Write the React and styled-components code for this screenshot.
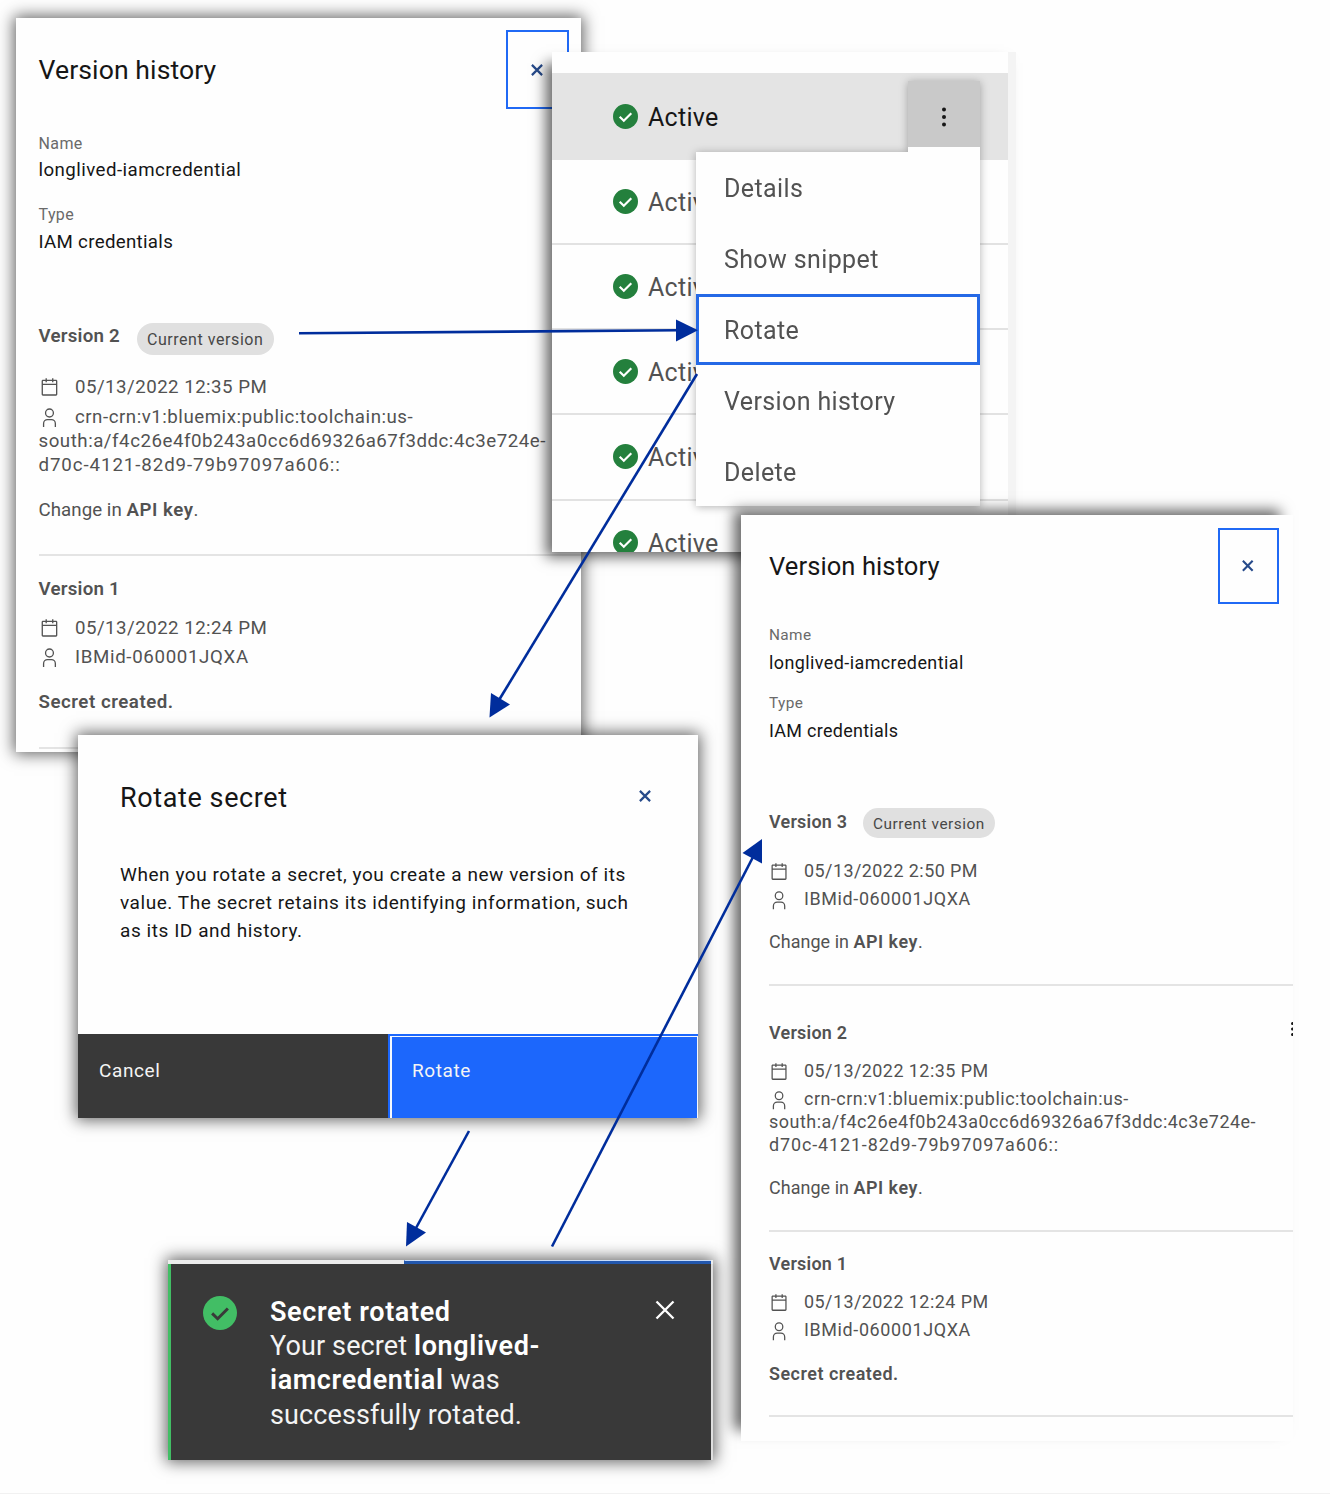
import React from "react";
import styled, { createGlobalStyle, css } from "styled-components";

const Global = createGlobalStyle`
  *, *::before, *::after { box-sizing: border-box; }
  body { margin: 0; background: #fefefe; font-family: Roboto, "Liberation Sans", sans-serif; }
  p, h2, h3, ul, dl, dd { margin: 0; padding: 0; font: inherit; }
  button { border: 0; padding: 0; margin: 0; background: none; font: inherit; text-align: left; }
  svg { display: block; }
`;

/* Free canvas that holds the overlapping windows */
const Canvas = styled.main`
  position: relative;
  width: 1330px;
  height: 1494px;
  overflow: hidden;
  background: #fefefe;
  border-bottom: 1px solid #f1f1f1;
`;

const Window = styled.section`
  position: absolute;
  left: ${(p) => p.$x}px;
  top: ${(p) => p.$y}px;
  width: ${(p) => p.$w}px;
  height: ${(p) => p.$h}px;
  box-shadow: ${(p) => p.$shadow || "0 0 15px 2px rgba(0, 0, 0, 0.62)"};
`;

/* ---------- icons ---------- */
const CloseIcon = ({ w = 12, h = 12, color = "#264a8a", sw = 2.2 }) => (
  <svg width={w} height={h} viewBox="0 0 12 12" preserveAspectRatio="none" fill="none" stroke={color} strokeWidth={sw}>
    <path d="M0.9 0.9 11.1 11.1 M11.1 0.9 0.9 11.1" />
  </svg>
);

const CalendarIcon = () => (
  <svg width="100%" height="100%" viewBox="0 0 32 32" preserveAspectRatio="none" fill="currentColor">
    <path d="M26 4h-4V2h-2v2h-8V2h-2v2H6c-1.100 0-2 .9-2 2v20c0 1.100.9 2 2 2h20c1.100 0 2-.9 2-2V6c0-1.100-.9-2-2-2zm0 22H6V12h20v14zm0-16H6V6h4v2h2V6h8v2h2V6h4v4z" />
  </svg>
);

const UserIcon = () => (
  <svg width="100%" height="100%" viewBox="0 0 32 32" preserveAspectRatio="none" fill="currentColor">
    <path d="M16 4a5 5 0 1 1-5 5 5 5 0 0 1 5-5m0-2a7 7 0 1 0 7 7 7 7 0 0 0-7-7zM26 30h-2v-5a5 5 0 0 0-5-5h-6a5 5 0 0 0-5 5v5H6v-5a7 7 0 0 1 7-7h6a7 7 0 0 1 7 7z" />
  </svg>
);

const CheckIcon = ({ size, color, tick, sw = 1.4 }) => (
  <svg width={size} height={size} viewBox="0 0 16 16">
    <circle cx="8" cy="8" r="8" fill={color} />
    <path d="M4.300 8.200 6.900 10.700 11.700 5.900" fill="none" stroke={tick} strokeWidth={sw} />
  </svg>
);

const DotsIcon = () => (
  <svg width="6" height="20" viewBox="0 0 6 20" fill="#161616">
    <circle cx="3" cy="2.500" r="2" />
    <circle cx="3" cy="10" r="2" />
    <circle cx="3" cy="17.500" r="2" />
  </svg>
);

/* ---------- version history ---------- */
const Sheet = styled.div`
  height: 100%;
  overflow: hidden;
  background: #fefefe;
  font-size: ${(p) => p.$unit}px;
  padding-left: ${(p) => p.$left}px;
  padding-top: ${(p) => p.$top}px;
  color: #525252;
  white-space: nowrap;
`;

const SheetHeader = styled.header`
  display: flex;
  justify-content: space-between;
  height: 7.9em;
  margin-right: ${(p) => p.$right}px;
  margin-bottom: ${(p) => p.$gap}em;
`;

const SheetTitle = styled.h2`
  color: #161616;
  font-size: 2.66em;
  line-height: 3.03em;
  letter-spacing: 0.0035em;
`;

const CloseBox = styled.button`
  display: grid;
  place-items: center;
  width: 6.35em;
  height: 7.9em;
  border: 2.500px solid #2069f5;
`;

const Fields = styled.dl`
  display: grid;
  gap: 2.15em;
  margin-bottom: 6.8em;
`;

const Label = styled.dt`
  font-size: 1.6em;
  line-height: 1.25em;
  color: #6a6a6a;
  letter-spacing: 0.025em;
  margin-bottom: 0.37em;
`;

const Value = styled.dd`
  font-size: 1.87em;
  line-height: 1.283em;
  color: #161616;
  letter-spacing: ${(p) => p.$ls || 0.0235}em;
`;

const Entry = styled.article`
  padding-top: ${(p) => p.$lead}em;
  padding-bottom: 3.15em;
  border-bottom: 2px solid #e4e4e4;
`;

const EntryHead = styled.div`
  display: flex;
  align-items: center;
  gap: 1.65em;
  height: ${(p) => (p.$tagged ? 3.2 : 2.4)}em;
  margin-bottom: ${(p) => (p.$tagged ? 2.15 : 1.55)}em;
`;

const EntryTitle = styled.h3`
  font-size: 1.87em;
  font-weight: 600;
  line-height: 1.283em;
  letter-spacing: 0.013em;
  margin-bottom: ${(p) => (p.$tagged ? "0.15em" : 0)};
`;

const EntryMenu = styled.span`
  margin-left: auto;
  margin-right: -2px;
  margin-top: -8px;
`;

const Tag = styled.span`
  font-size: 1.6em;
  line-height: 2.1em;
  height: 2em;
  padding: 0 0.65em;
  border-radius: 1em;
  background: #e0e0e0;
  color: #474747;
  letter-spacing: 0.035em;
`;

const Meta = styled.p`
  font-size: 1.87em;
  line-height: 1.283em;
  margin-bottom: 0.29em;
`;

const MetaText = styled.span`
  letter-spacing: ${(p) => p.$ls || 0.025}em;
`;

const MetaIcon = styled.span`
  display: inline-block;
  width: 1.12em;
  height: 1.14em;
  margin-right: 0.83em;
  vertical-align: -0.28em;
`;

const Strong = styled.strong`
  font-weight: 600;
`;

const Note = styled.p`
  font-size: 1.87em;
  line-height: 1.283em;
  letter-spacing: 0.003em;
  padding-top: 0.83em;
  ${Strong} { letter-spacing: 0.028em; }
`;

const CRN = [
  { text: "crn-crn:v1:bluemix:public:toolchain:us-", ls: 0.028 },
  { text: "south:a/f4c26e4f0b243a0cc6d69326a67f3ddc:4c3e724e-", ls: 0.028 },
  { text: "d70c-4121-82d9-79b97097a606::", ls: 0.049 },
];
const IBMID = [{ text: "IBMid-060001JQXA", ls: 0.035 }];

function VersionHistory({ unit, left, top, right, gap, versions }) {
  return (
    <Sheet $unit={unit} $left={left} $top={top}>
      <SheetHeader $right={right} $gap={gap}>
        <SheetTitle>Version history</SheetTitle>
        <CloseBox aria-label="Close">
          <CloseIcon w={unit * 1.2} h={unit * 1.2} />
        </CloseBox>
      </SheetHeader>
      <Fields>
        <div>
          <Label>Name</Label>
          <Value>longlived-iamcredential</Value>
        </div>
        <div>
          <Label>Type</Label>
          <Value $ls={0.0165}>IAM credentials</Value>
        </div>
      </Fields>
      {versions.map((v) => (
        <Entry key={v.n} $lead={v.current ? 0 : v.menu ? 3.7 : 2.15}>
          <EntryHead $tagged={v.current}>
            <EntryTitle $tagged={v.current}>Version {v.n}</EntryTitle>
            {v.current && <Tag>Current version</Tag>}
            {v.menu && (
              <EntryMenu>
                <svg width="5" height="16" viewBox="0 0 5 16" fill="#161616">
                  <circle cx="2.500" cy="2.500" r="1.500" />
                  <circle cx="2.500" cy="8" r="1.500" />
                  <circle cx="2.500" cy="13.500" r="1.500" />
                </svg>
              </EntryMenu>
            )}
          </EntryHead>
          <Meta>
            <MetaIcon><CalendarIcon /></MetaIcon>
            <MetaText>{v.date}</MetaText>
          </Meta>
          <Meta>
            <MetaIcon><UserIcon /></MetaIcon>
            {v.by.map((line, i) => (
              <React.Fragment key={line.text}>
                {i > 0 && <br />}
                <MetaText $ls={line.ls}>{line.text}</MetaText>
              </React.Fragment>
            ))}
          </Meta>
          <Note>
            {v.created ? <Strong>Secret created.</Strong> : <>Change in <Strong>API key</Strong>.</>}
          </Note>
        </Entry>
      ))}
    </Sheet>
  );
}

/* ---------- secrets table ---------- */
const Table = styled.div`
  height: 100%;
  overflow: hidden;
  background: #fefefe;
  border-right: 8px solid #f4f4f4;
  padding-top: 21px;
`;

const Row = styled.div`
  display: flex;
  align-items: center;
  gap: 10px;
  height: ${(p) => (p.$selected ? 87 : 85.150)}px;
  padding-left: 61px;
  font-size: 25px;
  letter-spacing: 0.3px;
  color: ${(p) => (p.$selected ? "#161616" : "#525252")};
  background: ${(p) => (p.$selected ? "#e4e4e4" : "transparent")};
  border-bottom: ${(p) => (p.$selected ? 0 : 2)}px solid #e2e2e2;
`;

const Status = styled.span`
  padding-top: 2px;
`;

const MenuLayer = styled.div`
  position: absolute;
  left: 144px;
  top: 29px;
  width: 284px;
  display: flex;
  flex-direction: column;
  filter: drop-shadow(0 1px 4px rgba(0, 0, 0, 0.3));
`;

const Trigger = styled.button`
  align-self: flex-end;
  display: grid;
  place-items: center;
  width: 72px;
  height: 71px;
  padding-top: 5px;
  background: #c9c9c9;
  border-bottom: 5px solid #fefefe;
`;

const Menu = styled.ul`
  list-style: none;
  background: #fefefe;
`;

const MenuItem = styled.li`
  display: flex;
  align-items: center;
  height: 70.900px;
  padding-top: 2px;
  padding-left: ${(p) => (p.$focused ? 25 : 28)}px;
  font-size: 25px;
  letter-spacing: 0.38px;
  color: #525252;
  ${(p) => p.$focused && css`border: 3.500px solid #2569e6;`}
`;

/* ---------- dialog ---------- */
const Dialog = styled.div`
  display: flex;
  flex-direction: column;
  height: 100%;
  background: #fefefe;
`;

const DialogHeader = styled.header`
  display: flex;
  justify-content: space-between;
  align-items: center;
  height: 36px;
  margin: 43px 47px 47px 42px;
`;

const DialogTitle = styled.h2`
  padding-top: 3px;
  font-size: 27px;
  letter-spacing: 0.6px;
  color: #161616;
`;

const DialogText = styled.p`
  flex: 1;
  padding-left: 42px;
  font-size: 19px;
  line-height: 28px;
  letter-spacing: 0.56px;
  color: #161616;
  white-space: nowrap;
`;

const Actions = styled.footer`
  display: flex;
  height: 84px;
`;

const Action = styled.button`
  width: 50%;
  padding-left: 21px;
  padding-bottom: 12px;
  color: #f4f4f4;
  font-size: 19px;
  letter-spacing: 0.6px;
  background: #393939;
`;

const PrimaryAction = styled(Action)`
  border: solid #1c67fc;
  border-width: 2.500px 0 0 2.500px;
  background: #1c67fc;
  padding: 0;
`;

const FocusRing = styled.span`
  display: flex;
  align-items: center;
  height: 100%;
  padding: 0 0 14px 20px;
  border: solid #f4f8ff;
  border-width: 1.500px 1px 0 2px;
`;

/* ---------- toast ---------- */
const ToastFrame = styled.div`
  height: 100%;
  display: flex;
  flex-direction: column;
  background: #dedede;
`;

const Edge = styled.div`
  display: flex;
  height: 4px;
  padding-right: 2px;
  background: #ececec;
  justify-content: flex-end;
  &::after {
    content: "";
    width: 307px;
    background: #2257ad;
    border-top: 1px solid #c8dcfa;
    border-left: 1px solid #2257ad;
  }
`;

const Toast = styled.div`
  flex: 1;
  display: flex;
  align-items: flex-start;
  margin-right: 2px;
  padding: 31px 36px 0 32px;
  background: #393939;
  border-left: 3.500px solid #42be65;
  color: #f4f4f4;
`;

const ToastIcon = styled.span`
  padding-top: 1px;
`;

const ToastText = styled.p`
  flex: 1;
  margin-left: 33px;
  font-size: 27px;
  line-height: 34.200px;
  letter-spacing: 0.12px;
  white-space: nowrap;
  ${Strong} { color: #fff; letter-spacing: 0.63px; }
`;

const ToastClose = styled.button`
  margin-top: 5px;
`;

/* ---------- connectors ---------- */
const Connectors = styled.svg`
  position: absolute;
  inset: 0;
  pointer-events: none;
`;

const ARROWS = [
  { line: "M299 333.200 678 330.300", head: "676,319.500 698,330.300 676,341.500" },
  { line: "M697 374 499 700", head: "489.500,717.500 491,693 510,704.500" },
  { line: "M469 1131 416 1228", head: "406,1246.500 407,1222 426,1232.500" },
  { line: "M552 1246.500 753 857", head: "762,839 742.500,853 762,863.500" },
];

export default function App() {
  return (
    <Canvas>
      <Global />
      <Window $x={16} $y={18} $w={565} $h={734}>
        <VersionHistory
          unit={10}
          left={22.5}
          top={12}
          right={12}
          gap={2.45}
          versions={[
            { n: 2, current: true, date: "05/13/2022 12:35 PM", by: CRN },
            { n: 1, date: "05/13/2022 12:24 PM", by: IBMID, created: true },
          ]}
        />
      </Window>

      <Window $x={552} $y={52} $w={464} $h={500} $shadow="-9px 8px 13px -3px rgba(0, 0, 0, 0.6)">
        <Table>
          {[0, 1, 2, 3, 4, 5].map((i) => (
            <Row key={i} $selected={i === 0}>
              <CheckIcon size={25} color="#24803d" tick="#fff" />
              <Status>Active</Status>
            </Row>
          ))}
        </Table>
        <MenuLayer>
          <Trigger aria-label="Options"><DotsIcon /></Trigger>
          <Menu>
            {["Details", "Show snippet", "Rotate", "Version history", "Delete"].map((t) => (
              <MenuItem key={t} $focused={t === "Rotate"}>{t}</MenuItem>
            ))}
          </Menu>
        </MenuLayer>
      </Window>

      <Window $x={741} $y={515} $w={552} $h={926} $shadow="-10px -8px 13px -3px rgba(0, 0, 0, 0.6)">
        <VersionHistory
          unit={9.6}
          left={28}
          top={13}
          right={14.5}
          gap={2.3}
          versions={[
            { n: 3, current: true, date: "05/13/2022 2:50 PM", by: IBMID },
            { n: 2, menu: true, date: "05/13/2022 12:35 PM", by: CRN },
            { n: 1, date: "05/13/2022 12:24 PM", by: IBMID, created: true },
          ]}
        />
      </Window>

      <Window $x={78} $y={735} $w={620} $h={383}>
        <Dialog>
          <DialogHeader>
            <DialogTitle>Rotate secret</DialogTitle>
            <CloseIcon w={12} h={12} />
          </DialogHeader>
          <DialogText>
            When you rotate a secret, you create a new version of its<br />
            value. The secret retains its identifying information, such<br />
            as its ID and history.
          </DialogText>
          <Actions>
            <Action>Cancel</Action>
            <PrimaryAction><FocusRing>Rotate</FocusRing></PrimaryAction>
          </Actions>
        </Dialog>
      </Window>

      <Window $x={168} $y={1260} $w={545} $h={200}>
        <ToastFrame>
          <Edge />
          <Toast>
            <ToastIcon><CheckIcon size={34} color="#42be65" tick="#393939" /></ToastIcon>
            <ToastText>
              <Strong>Secret rotated</Strong><br />
              Your secret <Strong>longlived-</Strong><br />
              <Strong>iamcredential</Strong> was<br />
              successfully rotated.
            </ToastText>
            <ToastClose aria-label="Dismiss">
              <CloseIcon w={20} h={20} color="#fff" sw={1.4} />
            </ToastClose>
          </Toast>
        </ToastFrame>
      </Window>

      <Connectors width="1330" height="1494" viewBox="0 0 1330 1494">
        {ARROWS.map((a) => (
          <g key={a.line}>
            <path d={a.line} stroke="#002d9c" strokeWidth="2.6" fill="none" />
            <polygon points={a.head} fill="#002d9c" />
          </g>
        ))}
      </Connectors>
    </Canvas>
  );
}
